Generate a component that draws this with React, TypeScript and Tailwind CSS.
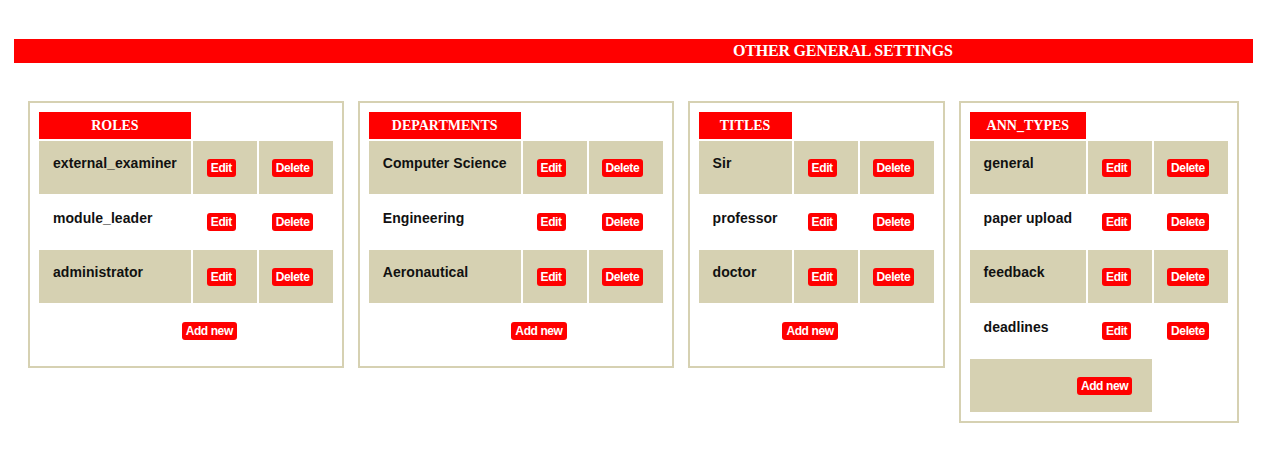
import React from "react"

type Section = { title: string; items: string[] }

const sections: Section[] = [
  { title: "ROLES", items: ["external_examiner", "module_leader", "administrator"] },
  { title: "DEPARTMENTS", items: ["Computer Science", "Engineering", "Aeronautical"] },
  { title: "TITLES", items: ["Sir", "professor", "doctor"] },
  { title: "ANN_TYPES", items: ["general", "paper upload", "feedback", "deadlines"] },
]

function RedButton({ label, right }: { label: string; right?: boolean }) {
  return (
    <button
      className={
        "mt-[1px] block h-[18px] rounded-[3px] bg-[#ff0000] px-[4px] text-[12px] font-bold leading-[18px] tracking-[-0.4px] text-white " +
        (right ? "ml-auto" : "")
      }
    >
      {label}
    </button>
  )
}

function SettingsCard({ section }: { section: Section }) {
  const addTan = section.items.length % 2 === 0
  return (
    <div className="border-2 border-[#d6d1b2] p-[7px]">
      <table className="border-separate border-spacing-[2px]">
        <tbody>
          <tr className="h-[27px]">
            <th className="bg-[#ff0000] px-[14px] text-center align-middle font-['Liberation_Serif',serif] text-[14px] font-bold text-white">
              {section.title}
            </th>
          </tr>
          {section.items.map((item, i) => {
            const bg = i % 2 === 0 ? "bg-[#d6d1b2]" : ""
            return (
              <tr key={item} className="h-[52.5px]">
                <td className={`${bg} whitespace-nowrap px-[14px] pt-[14px] align-top text-[14px] font-bold leading-[16px] tracking-[0.05px] text-[#111]`}>
                  {item}
                </td>
                <td className={`${bg} w-[64px] pl-[14px] align-middle`}>
                  <RedButton label="Edit" />
                </td>
                <td className={`${bg} w-[74px] pl-[13px] align-middle`}>
                  <RedButton label="Delete" />
                </td>
              </tr>
            )
          })}
          <tr className="h-[52.5px]">
            <td colSpan={2} className={`${addTan ? "bg-[#d6d1b2]" : ""} pr-[20px] align-middle`}>
              <RedButton label="Add new" right />
            </td>
          </tr>
        </tbody>
      </table>
    </div>
  )
}

export default function App() {
  return (
    <div className="min-h-[465px] bg-white pt-[39px] font-['Liberation_Sans',Arial,sans-serif]">
      {/* Page header */}
      <div className="ml-[14px] mr-[15px] flex h-[24px] items-center bg-[#ff0000] pl-[719px] font-['Liberation_Serif',serif] text-[16px] font-bold tracking-[-0.2px] text-white">
        OTHER GENERAL SETTINGS
      </div>

      {/* Setting tables */}
      <div className="mt-[38px] flex items-start gap-[14px] pl-[28px]">
        {sections.map((s) => (
          <SettingsCard key={s.title} section={s} />
        ))}
      </div>
    </div>
  )
}
